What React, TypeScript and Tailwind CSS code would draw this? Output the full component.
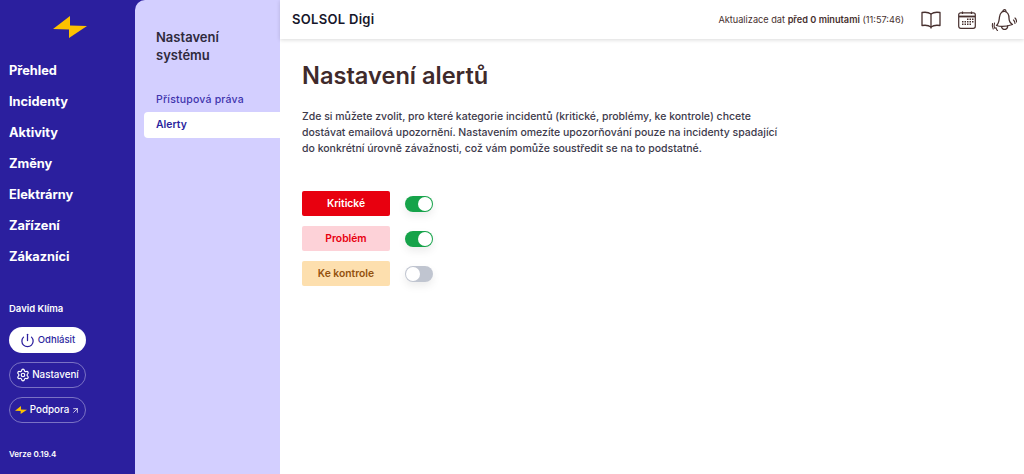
import { Power, Settings, ArrowUpRight } from "lucide-react";

const NAV = ["Přehled", "Incidenty", "Aktivity", "Změny", "Elektrárny", "Zařízení", "Zákazníci"];

const ALERTS = [
  { label: "Kritické", box: "bg-[#e8000f] text-white", on: true },
  { label: "Problém", box: "bg-[#fdd2d8] text-[#e8000f]", on: true },
  { label: "Ke kontrole", box: "bg-[#fddfae] text-[#94520f]", on: false },
];

function Bolt({ className }: { className: string }) {
  return (
    <svg viewBox="0 0 34 22" className={className}>
      <path d="M17 0 L17 9.500 L34 10 L16 22 L16 13.500 L0 13 Z" fill="#fdc100" />
    </svg>
  );
}

function Book() {
  return (
    <svg viewBox="0 0 20 18" className="w-[20px] h-[18px]" fill="none" stroke="#47302f" strokeWidth="1.3" strokeLinejoin="round">
      <path d="M10 3 C8 1.500 4 1 1 1.500 V14.500 C4 14 8 14.500 10 16 C12 14.500 16 14 19 14.500 V1.500 C16 1 12 1.500 10 3 Z" />
      <path d="M10 3 V17.500" />
    </svg>
  );
}

function Calendar() {
  return (
    <svg viewBox="0 0 18 18" className="w-[18px] h-[18px]" fill="none" stroke="#47302f" strokeWidth="1.2">
      <rect x="0.700" y="1.800" width="16.600" height="15.500" rx="2" />
      <path d="M1 5.500 H17" strokeWidth="1.800" />
      <path d="M4.500 0.500 V3M13.500 0.500 V3" />
      <g fill="#47302f" stroke="none">
        <rect x="9" y="7.500" width="1.500" height="1.500" />
        <rect x="11.500" y="7.500" width="1.500" height="1.500" />
        <rect x="14" y="7.500" width="1.500" height="1.500" />
        <rect x="4" y="10" width="1.500" height="1.500" />
        <rect x="6.500" y="10" width="1.500" height="1.500" />
        <rect x="9" y="10" width="1.500" height="1.500" />
        <rect x="11.500" y="10" width="1.500" height="1.500" />
        <rect x="14" y="10" width="1.500" height="1.500" />
        <rect x="4" y="12.500" width="1.500" height="1.500" />
        <rect x="6.500" y="12.500" width="1.500" height="1.500" />
        <rect x="9" y="12.500" width="1.500" height="1.500" />
        <rect x="11.500" y="12.500" width="1.500" height="1.500" />
      </g>
    </svg>
  );
}

function Bell() {
  return (
    <svg viewBox="0 0 26 24" className="w-[26px] h-[24px]" fill="none" stroke="#47302f" strokeWidth="1.300" strokeLinecap="round" strokeLinejoin="round">
      <path d="M5.500 17.500 C8 15.500 8 12.500 8.500 9 C9 5 11.500 2.500 14 3.500 C17 4.500 18 7 18 10 C18 13 19 15 21.500 16.500 C17 18 10 19 5.500 17.500 Z" />
      <path d="M10.500 18.800 C11 21 13 21.800 14.500 21.300 C16 20.800 16.800 19.500 16.500 18" />
      <path d="M12 3.500 C12 1.200 14.800 1 15 3.500" />
      <path d="M3.500 15 C2.800 16.800 3 18.800 4 20.500M1.500 15.500 C1 17.500 1.300 19.500 2.200 21M5 19.500 C5.200 20.800 5.500 21.800 6.500 22.500" strokeWidth="1.100" />
      <path d="M22.500 12 C23.500 13 24 14 24 15.500M24 10 C25 11 25.600 12.500 25.600 14" strokeWidth="1.100" />
    </svg>
  );
}

function Toggle({ on }: { on: boolean }) {
  return (
    <div className={`w-7 h-4 rounded-full flex items-center px-[1px] shadow-[0_4px_8px_rgba(0,0,0,0.08)] ${on ? "bg-[#16a34a] justify-end" : "bg-[#c0c5d0] justify-start"}`}>
      <span className="w-[14px] h-[14px] rounded-full bg-white" />
    </div>
  );
}

export default function App() {
  return (
    <div className="flex h-[474px] w-[1024px] overflow-hidden bg-[#2b1f9e] font-['Inter',sans-serif]">
      {/* main menu */}
      <aside className="w-[135px] shrink-0 flex flex-col text-white">
        <div className="h-[54px] pt-[16px] pl-[53px]">
          <Bolt className="w-[34px] h-[22px]" />
        </div>
        <nav className="flex flex-col gap-[11px] pl-[9px] pt-[7px]">
          {NAV.map((item) => (
            <a key={item} className="h-[20px] leading-[20px] text-[12.8px] font-bold">
              {item}
            </a>
          ))}
        </nav>
        <div className="pl-[9px] pt-[35px] pb-[14px] flex flex-col flex-1">
          <p className="text-[9.5px] leading-[14px] font-semibold">David Klíma</p>
          <button className="mt-[11px] w-[77px] h-[26px] rounded-full bg-white text-[#2b1f9e] flex items-center justify-center gap-[3px] text-[9.5px] font-medium">
            <Power size={15} /> Odhlásit
          </button>
          <button className="mt-[9px] w-[77px] h-[26px] rounded-full border border-[#7a72c4] flex items-center justify-center gap-[2px] text-[9.8px] font-medium">
            <Settings size={14} /> Nastavení
          </button>
          <button className="mt-[9px] w-[77px] h-[26px] rounded-full border border-[#7a72c4] flex items-center justify-center gap-[3px] text-[9.8px] font-medium">
            <Bolt className="w-[12px] h-[8px]" /> Podpora <ArrowUpRight size={9} className="-ml-[1px]" />
          </button>
          <p className="mt-auto text-[8px] leading-[12px] font-semibold">Verze 0.19.4</p>
        </div>
      </aside>

      {/* submenu */}
      <aside className="w-[145px] shrink-0 bg-[#d3cfff] rounded-tl-[10px] flex flex-col">
        <h2 className="pl-[21px] pt-[28px] text-[13px] leading-[18px] font-semibold text-[#2f2a3d]">
          Nastavení
          <br />
          systému
        </h2>
        <a className="pl-[21px] mt-[29px] text-[10.5px] leading-[14px] font-medium text-[#3f34ad] tracking-[0.2px]">Přístupová práva</a>
        <a className="ml-[9px] mt-[5px] h-[26px] pl-[12px] bg-white rounded-l-[4px] flex items-center text-[10.4px] font-semibold text-[#2b1f9e]">Alerty</a>
      </aside>

      {/* content */}
      <div className="flex-1 bg-white flex flex-col">
        <header className="h-[39px] shrink-0 flex items-center pl-[12px] pr-[7px] shadow-[0_1px_4px_rgba(0,0,0,0.15)]">
          <span className="text-[13px] font-semibold text-[#16162a] tracking-[0.3px]">SOLSOL Digi</span>
          <span className="ml-auto text-[9.2px] text-[#47302f]">
            Aktualizace dat <b className="font-semibold">před 0 minutami</b> (11:57:46)
          </span>
          <span className="ml-[17px]"><Book /></span>
          <span className="ml-[17px]"><Calendar /></span>
          <span className="ml-[15px]"><Bell /></span>
        </header>
        <main className="pl-[22px] pt-[22px]">
          <h1 className="text-[23.6px] leading-[30px] font-semibold text-[#3f2a2b]">Nastavení alertů</h1>
          <p className="mt-[18px] w-[490px] text-[10.5px] leading-[16px] font-medium text-[#3d3a4b]">
            Zde si můžete zvolit, pro které kategorie incidentů (kritické, problémy, ke kontrole) chcete dostávat emailová upozornění. Nastavením omezíte upozorňování pouze na incidenty spadající do konkrétní úrovně závažnosti, což vám pomůže soustředit se na to podstatné.
          </p>
          <div className="mt-[34px] flex flex-col gap-[10px]">
            {ALERTS.map((a) => (
              <div key={a.label} className="flex items-center gap-[15px]">
                <div className={`w-[88px] h-[25px] rounded-[2px] flex items-center justify-center text-[10.3px] font-semibold ${a.box}`}>{a.label}</div>
                <Toggle on={a.on} />
              </div>
            ))}
          </div>
        </main>
      </div>
    </div>
  );
}
